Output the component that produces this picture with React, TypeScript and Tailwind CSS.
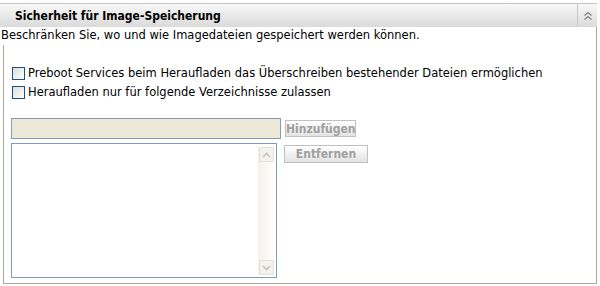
import React from "react";

function Check() {
  return (
    <span className="inline-block w-[13px] h-[13px] border border-[#1c5180] bg-gradient-to-br from-[#dcdcd7] to-white shrink-0" />
  );
}

function ScrollBtn({ up }: { up: boolean }) {
  return (
    <div className="w-[15px] h-[15px] border border-[#e3e1d6] rounded-[2px] bg-[#f3f2ec] flex items-center justify-center">
      <svg width="9" height="6" viewBox="0 0 9 6">
        <path d={up ? "M1 5 L4.5 1.5 L8 5" : "M1 1 L4.5 4.5 L8 1"} stroke="#c5c5c0" strokeWidth="1.6" fill="none" />
      </svg>
    </div>
  );
}

export default function App() {
  return (
    <div className="w-[600px] h-[286px] bg-white overflow-hidden font-['DejaVu_Sans',sans-serif] text-[11.5px] text-black">
      <div className="w-[597px] pt-[3px]">
        <div className="h-[24px] border-t border-[#c4c4c4] bg-gradient-to-b from-[#f8f8f8] to-[#dadada] flex items-stretch">
          <div className="flex-1 pl-[15px] flex items-center font-['DejaVu_Sans_Condensed',sans-serif] font-bold text-[12px] text-black">
            Sicherheit für Image-Speicherung
          </div>
          <div className="w-[20px] border-l border-[#c8c8c8] flex items-center justify-center">
            <svg width="10" height="10" viewBox="0 0 10 10">
              <path d="M1.5 4.5 L5 1.5 L8.5 4.5 M1.5 8.5 L5 5.5 L8.5 8.5" stroke="#808080" strokeWidth="1.3" fill="none" />
            </svg>
          </div>
        </div>
        <div className="border-r border-[#aca899]">
          <div className="h-[18px] pl-[1px] flex items-center">
            Beschränken Sie, wo und wie Imagedateien gespeichert werden können.
          </div>
          <div className="ml-[3px] border-l border-b border-[#aca899] h-[239px] pt-[22px] pl-[8px]">
            <div className="flex items-center gap-[3px] h-[13px]">
              <Check />
              <span>Preboot Services beim Heraufladen das Überschreiben bestehender Dateien ermöglichen</span>
            </div>
            <div className="flex items-center gap-[3px] h-[13px] mt-[6px]">
              <Check />
              <span>Heraufladen nur für folgende Verzeichnisse zulassen</span>
            </div>
            <div className="flex items-center mt-[19px] -ml-[1px]">
              <div className="w-[270px] h-[21px] border border-[#7f9db9] bg-[#ece9d8]" />
              <button className="ml-[4px] w-[71px] h-[17px] border border-[#c0c0c0] bg-gradient-to-b from-white to-[#e4e4e4] font-['DejaVu_Sans_Condensed',sans-serif] font-bold text-[12px] text-[#a0a0a0] leading-none">
                Hinzufügen
              </button>
            </div>
            <div className="flex items-start mt-[4px] -ml-[1px]">
              <div className="w-[266px] h-[135px] border border-[#7f9db9] bg-white flex justify-end pr-[2px] pt-[3px] pb-[2px]">
                <div className="w-[16px] h-full bg-gradient-to-r from-[#f3f1ec] to-[#fefefb] flex flex-col justify-between items-center">
                  <ScrollBtn up />
                  <ScrollBtn up={false} />
                </div>
              </div>
              <button className="ml-[7px] mt-[2px] w-[84px] h-[18px] border border-[#c0c0c0] bg-gradient-to-b from-white to-[#e4e4e4] font-['DejaVu_Sans_Condensed',sans-serif] font-bold text-[12px] text-[#a0a0a0] leading-none">
                Entfernen
              </button>
            </div>
          </div>
        </div>
      </div>
    </div>
  );
}
